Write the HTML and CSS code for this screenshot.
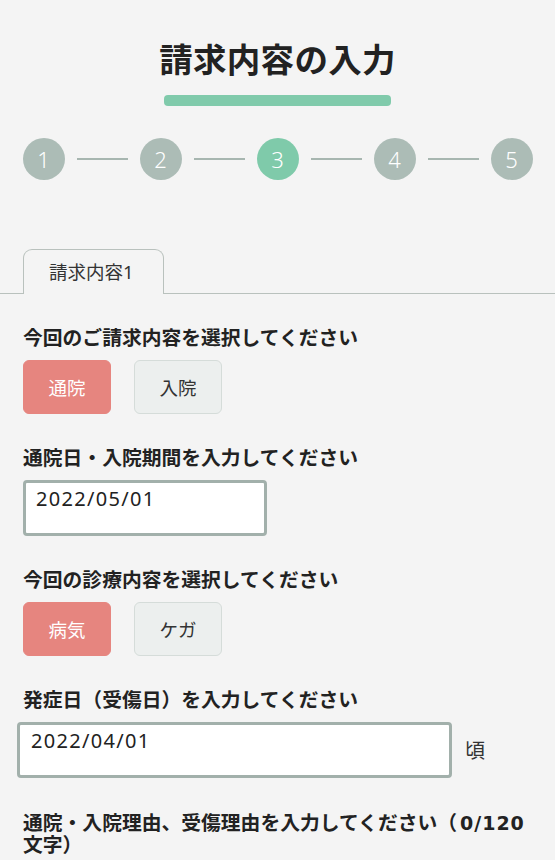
FILE: index.html
```html
<!DOCTYPE html>
<html lang="ja">
<head>
<meta charset="utf-8">
<title>請求内容の入力</title>
<link rel="stylesheet" href="styles.css">
</head>
<body>
<header class="header">
  <h1 class="title">請求内容の入力</h1>
  <div class="title-bar"></div>
  <ol class="steps">
    <li class="step">1</li>
    <li class="step-line"></li>
    <li class="step">2</li>
    <li class="step-line"></li>
    <li class="step step-active">3</li>
    <li class="step-line"></li>
    <li class="step">4</li>
    <li class="step-line"></li>
    <li class="step">5</li>
  </ol>
</header>
<div class="tabs">
  <div class="tab">請求内容1</div>
</div>
<main class="form">
  <section class="field">
    <p class="label">今回のご請求内容を選択してください</p>
    <div class="choices">
      <button class="choice choice-on">通院</button>
      <button class="choice">入院</button>
    </div>
  </section>
  <section class="field">
    <p class="label">通院日・入院期間を入力してください</p>
    <div class="input input-short">2022/05/01</div>
  </section>
  <section class="field">
    <p class="label">今回の診療内容を選択してください</p>
    <div class="choices">
      <button class="choice choice-on">病気</button>
      <button class="choice">ケガ</button>
    </div>
  </section>
  <section class="field">
    <p class="label">発症日（受傷日）を入力してください</p>
    <div class="date-row">
      <div class="input input-long">2022/04/01</div>
      <span class="suffix">頃</span>
    </div>
  </section>
  <section class="field field-last">
    <p class="label label-wrap">通院・入院理由、受傷理由を入力してください（<span class="count">0/120</span><br>文字）</p>
  </section>
</main>
</body>
</html>
```

FILE: styles.css
```css
* { box-sizing: border-box; }
html, body {
  margin: 0;
  padding: 0;
  background: #f4f4f4;
}
body {
  font-family: "Noto Sans", "Noto Sans CJK JP", sans-serif;
  color: #222;
  width: 555px;
  height: 860px;
  overflow: hidden;
}
.header {
  padding-top: 38px;
  display: flex;
  flex-direction: column;
  align-items: center;
}
.title {
  margin: 0;
  font-family: "Noto Sans CJK JP", sans-serif;
  font-size: 33.5px;
  line-height: 40px;
  font-weight: 700;
  color: #222;
  letter-spacing: 0.3px;
}
.title-bar {
  margin-top: 17px;
  width: 227px;
  height: 11px;
  border-radius: 4px;
  background: #80caab;
}
.steps {
  list-style: none;
  margin: 32px 0 0;
  padding: 0;
  display: flex;
  align-items: center;
  gap: 12px;
}
.step {
  width: 42px;
  height: 42px;
  border-radius: 50%;
  background: #acbcb6;
  color: #fff;
  font-family: "Noto Sans", sans-serif;
  font-weight: 300;
  font-size: 22px;
  line-height: 42px;
  text-align: center;
}
.step-active { background: #7fcaaa; }
.step-line {
  width: 51px;
  height: 2px;
  background: #a7b6b0;
}
.tabs {
  margin-top: 69px;
  border-bottom: 1.5px solid #b9c1bd;
  padding-left: 23px;
  display: flex;
}
.tab {
  width: 141px;
  height: 45px;
  margin-bottom: -1.5px;
  border: 1.5px solid #b9c1bd;
  border-bottom: none;
  border-radius: 9px 9px 0 0;
  background: #f4f4f4;
  font-size: 18.5px;
  line-height: 44px;
  padding-left: 25px;
  color: #333;
}
.form {
  padding: 34px 23px 0;
}
.field + .field { margin-top: 34px; }
.label {
  margin: 0 0 12px;
  font-family: "Liberation Sans", "Noto Sans CJK JP", sans-serif;
  font-size: 19.8px;
  line-height: 20px;
  font-weight: 700;
  color: #222;
}
.field-last { margin-top: 34px; }
.label-wrap {
  line-height: 22px;
}
.count {
  font-family: "DejaVu Sans", sans-serif;
  font-size: 19px;
  letter-spacing: 1px;
  margin-left: 3px;
}
.choices {
  display: flex;
  gap: 23px;
}
.choice {
  width: 88px;
  height: 54px;
  border-radius: 6px;
  border: 1.5px solid #d5dcd9;
  background: #ecefee;
  color: #333;
  font-family: "Noto Sans CJK JP", sans-serif;
  font-size: 18.5px;
  padding: 0;
  margin: 0;
}
.choice-on {
  background: #e6857f;
  border-color: #e6857f;
  color: #fff;
}
.input {
  height: 56px;
  border: 3px solid #a2b0ab;
  border-radius: 4px;
  background: #fff;
  font-family: "Noto Sans", "Noto Sans CJK JP", sans-serif;
  font-size: 20px;
  line-height: 24px;
  letter-spacing: 1.3px;
  padding: 4px 10px;
  color: #222;
}
.input-short { width: 244px; }
.date-row {
  display: flex;
  align-items: center;
  margin-left: -6px;
}
.input-long {
  width: 435px;
  padding-left: 11px;
}
.suffix {
  margin-left: 13px;
  font-family: "Noto Sans CJK JP", sans-serif;
  font-size: 20px;
  color: #333;
}
```
